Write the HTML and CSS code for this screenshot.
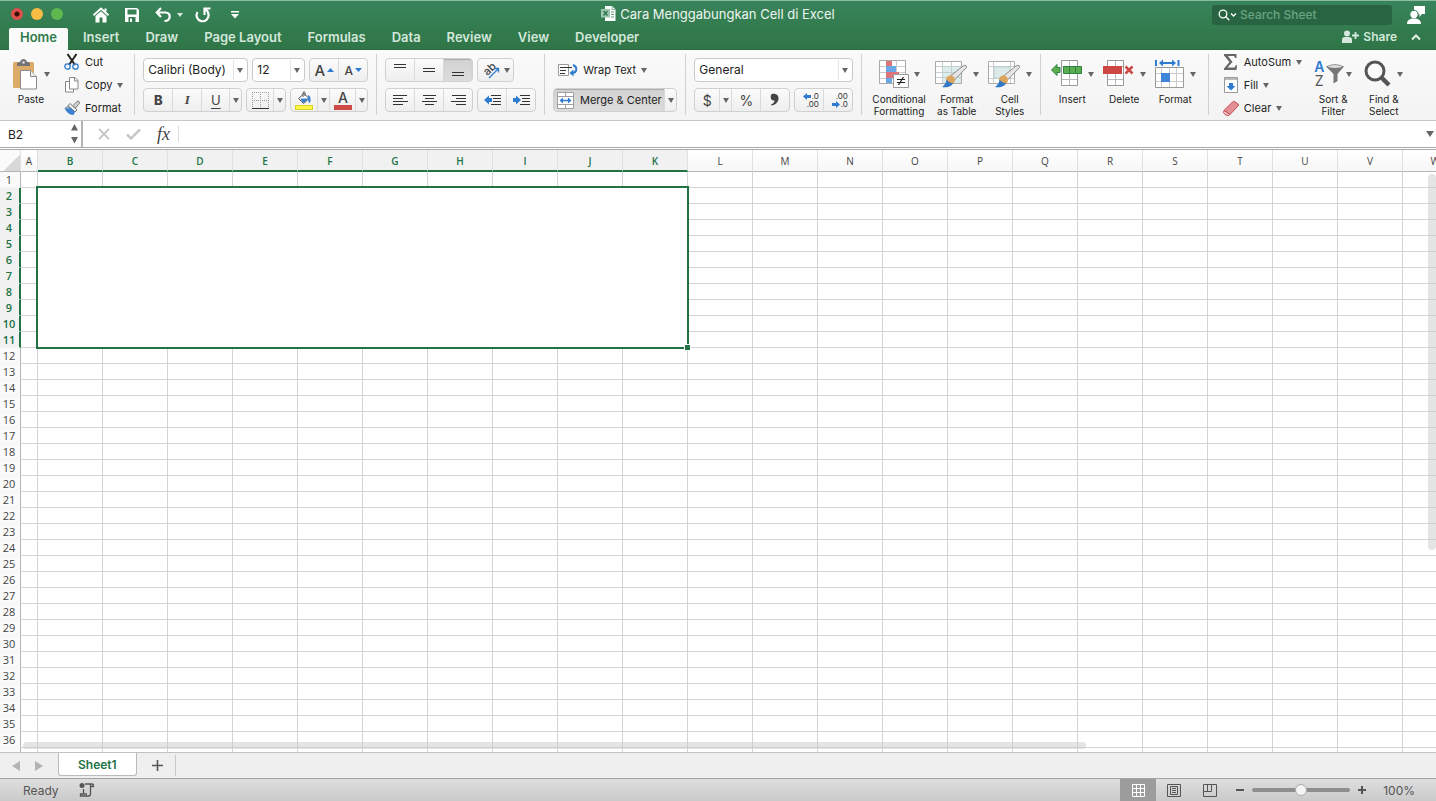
FILE: index.html
```
<!DOCTYPE html>
<html lang="en">
<head>
    <meta charset="UTF-8">
    <meta name="viewport" content="width=device-width, initial-scale=1.0">
    <title>Cara Menggabungkan Cell di Excel</title>
    <link rel="stylesheet" href="styles.css">
</head>
<body>
    <header class="header">
        <div class="titlebar">
            <div class="quick">
                <div class="lights">
                    <button class="light red" aria-label="Close"></button>
                    <button class="light yellow" aria-label="Minimize"></button>
                    <button class="light green" aria-label="Zoom window"></button>
                </div>
                <button class="q-home" aria-label="Home screen">
                    <svg width="18" height="16" viewBox="0 0 18 16"><path d="M1.5 8.2L9 1.6l7.500 6.600M13.500 4.500V1.500" fill="none" stroke="#fff" stroke-width="2"/><path d="M3.500 9L9 4.300 14.500 9v6.500H10.500v-5h-3v5h-4z" fill="#fff"/></svg>
                </button>
                <button class="q-save" aria-label="Save">
                    <svg width="14" height="14" viewBox="0 0 14 14"><path d="M0 0h12l2 2v12H0zM2.500 1.500v5h9v-5zM3.500 9v5h7V9z" fill="#fff" fill-rule="evenodd"/><path d="M5 10.500h2V14H5z" fill="#fff"/></svg>
                </button>
                <button class="q-undo" aria-label="Undo">
                    <svg width="17" height="16" viewBox="0 0 17 16"><path d="M6 1L1.800 5.500 6 10M2 5.500h8.500c6 0 5.500 8.500-1 8.500" fill="none" stroke="#fff" stroke-width="2.200"/></svg>
                    <span class="caret light-caret"></span>
                </button>
                <button class="q-redo" aria-label="Redo">
                    <svg width="16" height="16" viewBox="0 0 16 16"><path d="M2.500 5A6 6 0 1 0 13.500 7.500Q13.500 4.500 10.500 2.500" fill="none" stroke="#fff" stroke-width="2.200"/><path d="M15.500 1.500H9.500V8" fill="none" stroke="#fff" stroke-width="2.200"/></svg>
                </button>
                <button class="q-more" aria-label="Customize toolbar">
                    <svg width="8" height="8" viewBox="0 0 8 8"><path d="M0 0h8v1.500H0zM0 3h8L4 7.500z" fill="#fff"/></svg>
                </button>
            </div>
            <h1 class="doc-title">
                <svg width="15" height="15" viewBox="0 0 15 15"><path d="M4 0h7l3.500 3.500V15H4z" fill="#fff"/><path d="M11 0v3.500h3.500" fill="none" stroke="#86b899"/><path d="M10 6h3M10 8.500h3M10 11h3" stroke="#5a9a74"/><path d="M0 3h9v8.500H0z" fill="#9cc6ad"/><path d="M2.500 5l4 4.500M6.500 5l-4 4.500" stroke="#2c7448" stroke-width="1.300"/></svg>
                Cara Menggabungkan Cell di Excel
            </h1>
            <div class="tools">
                <div class="search">
                    <svg width="19" height="12" viewBox="0 0 19 12"><circle cx="5" cy="5" r="3.800" fill="none" stroke="#fff" stroke-width="1.300"/><path d="M7.800 7.800l3.500 3.500M13 4.500l2.500 2.500L18 4.500" fill="none" stroke="#fff" stroke-width="1.300"/></svg>
                    <input type="text" placeholder="Search Sheet" aria-label="Search Sheet">
                </div>
                <button class="feedback" aria-label="Feedback">
                    <svg width="18" height="18" viewBox="0 0 18 18"><path d="M7 0h11v8h-3l-2.500 3V8H7z" fill="#fff"/><circle cx="7" cy="8.500" r="4.200" fill="#fff" stroke="#327c50"/><path d="M0 18c0-4 3-5.500 7-5.500s7 1.500 7 5.500z" fill="#fff"/></svg>
                </button>
            </div>
        </div>
        <nav class="tabs">
            <a class="tab active" href="#">Home</a>
            <a class="tab" href="#">Insert</a>
            <a class="tab" href="#">Draw</a>
            <a class="tab" href="#">Page Layout</a>
            <a class="tab" href="#">Formulas</a>
            <a class="tab" href="#">Data</a>
            <a class="tab" href="#">Review</a>
            <a class="tab" href="#">View</a>
            <a class="tab" href="#">Developer</a>
            <button class="share">
                <svg width="17" height="13" viewBox="0 0 17 13"><circle cx="5" cy="3.500" r="3" fill="#d6e8dc"/><path d="M0 13V9.500Q0 7 3 7h4q3 0 3 2.500V13z" fill="#d6e8dc"/><path d="M13.500 2v7M10 5.500h7" stroke="#d6e8dc" stroke-width="1.800"/></svg>
                Share
            </button>
            <button class="collapse" aria-label="Collapse ribbon">
                <svg width="10" height="7" viewBox="0 0 10 7"><path d="M1 5.500l4-4 4 4" fill="none" stroke="#e3f0e7" stroke-width="2"/></svg>
            </button>
        </nav>
    </header>

    <section class="ribbon">
        <div class="group clipboard">
            <button class="big paste">
                <span class="art">
                    <svg width="27" height="31" viewBox="0 0 27 31"><rect x="1" y="3" width="21" height="26" rx="1.500" fill="#dcab67"/><path d="M5 7V4.500q0-1.500 2-1.500h1q1-3 3.500-3T15 3h1q2 0 2 1.500V7z" fill="#737373"/><circle cx="11.500" cy="3.500" r="1.300" fill="#ddd"/><path d="M8.500 11.500h10l6 6v12.500h-16z" fill="#fff" stroke="#8b8b8b"/><path d="M18.500 11.500v6h6" fill="#eee" stroke="#8b8b8b"/></svg>
                    <span class="caret"></span>
                </span>
                <span>Paste</span>
            </button>
            <div class="stack">
                <button class="small">
                    <svg width="16" height="16" viewBox="0 0 16 16"><path d="M3.500 0L11 11M12.500 0L5 11" stroke="#222" stroke-width="2"/><circle cx="3.500" cy="12.500" r="2.700" fill="none" stroke="#2f7bd0" stroke-width="1.300"/><circle cx="11.500" cy="12.500" r="2.700" fill="none" stroke="#2f7bd0" stroke-width="1.300"/></svg>
                    Cut
                </button>
                <button class="small">
                    <svg width="16" height="16" viewBox="0 0 16 16"><path d="M1.500 4.500h6l2 2v8.500h-8z" fill="#fff" stroke="#888"/><path d="M5.500.500h5.500l3 3v8.500H5.500z" fill="#fff" stroke="#888"/><path d="M10.500.500v3.500H14" fill="none" stroke="#888"/></svg>
                    Copy <span class="caret"></span>
                </button>
                <button class="small">
                    <svg width="16" height="16" viewBox="0 0 16 16"><path d="M9 5.500L13.500 1q2 0 2 2L11.500 8z" fill="#d5d5d5" stroke="#777"/><path d="M6 3.500l7 6.500-2 2L4 5.500z" fill="#f0f0f0" stroke="#777"/><path d="M4 5.500l7 6.500-1.500 3C5 15 2.500 12 .5 8q2-.5 3.500-2.500z" fill="#3a82d1"/><path d="M4 5.500L6.500 8Q4 9.500.5 8q2-.5 3.500-2.500z" fill="#9aa5b0"/></svg>
                    Format
                </button>
            </div>
        </div>

        <div class="group rows">
            <div class="row">
                <div class="combo family"><select aria-label="Font"><option>Calibri (Body)</option></select></div>
                <div class="combo size"><select aria-label="Font size"><option>12</option></select></div>
                <div class="seg">
                    <button class="grow" aria-label="Increase font size">A<svg width="7" height="10" viewBox="0 0 7 10"><path d="M0 7h7L3.500 3z" fill="#2f7bd0"/></svg></button>
                    <button class="shrink" aria-label="Decrease font size">A<svg width="7" height="10" viewBox="0 0 7 10"><path d="M0 3h7L3.500 7z" fill="#2f7bd0"/></svg></button>
                </div>
            </div>
            <div class="row">
                <div class="seg">
                    <button class="bold">B</button>
                    <button class="italic">I</button>
                    <button class="under">U</button>
                    <button class="drop" aria-label="Underline options"><span class="caret"></span></button>
                </div>
                <div class="seg">
                    <button class="split" aria-label="Borders"><svg width="17" height="17" viewBox="0 0 17 17"><path d="M.5 0v16M8.500 0v16M16.500 0v16M0 .5h17M0 8.500h17" stroke="#999" stroke-dasharray="1 1"/><path d="M0 16.500h17" stroke="#333"/></svg></button>
                    <button class="drop" aria-label="Border options"><span class="caret"></span></button>
                </div>
                <div class="seg">
                    <button class="tint" aria-label="Fill color"><svg width="18" height="19" viewBox="0 0 18 19"><rect x=".5" y="14.500" width="17" height="4" fill="#fbf54a" stroke="#ddd321"/><path d="M3.500 7.500L9 2.500l5 5-5.500 5z" fill="#fff" stroke="#555"/><path d="M8 6V1.500q1-1.500 2 0V5" fill="none" stroke="#555"/><path d="M5 7.500h8.500l-5 4.500zM13 4c3 1 3 5 2 8-2 0-2-4-2-8z" fill="#3a82d1"/></svg></button>
                    <button class="drop" aria-label="Fill color options"><span class="caret"></span></button>
                    <button class="tint font-color" aria-label="Font color">A<svg width="18" height="5" viewBox="0 0 18 5"><rect width="18" height="5" fill="#d04a45"/></svg></button>
                    <button class="drop" aria-label="Font color options"><span class="caret"></span></button>
                </div>
            </div>
        </div>

        <div class="group rows">
            <div class="row">
                <div class="seg">
                    <button aria-label="Top align"><svg width="14" height="14" viewBox="0 0 14 14"><path d="M1 1.500h12M1 4.500h12" stroke="#333"/></svg></button>
                    <button aria-label="Middle align"><svg width="14" height="14" viewBox="0 0 14 14"><path d="M1 5.500h12M1 8.500h12" stroke="#333"/></svg></button>
                    <button class="pressed" aria-label="Bottom align"><svg width="14" height="14" viewBox="0 0 14 14"><path d="M1 9.500h12M1 12.500h12" stroke="#333"/></svg></button>
                </div>
                <div class="seg">
                    <button class="orient" aria-label="Orientation">
                        <svg width="18" height="18" viewBox="0 0 18 18"><text class="glyph" x="1" y="12" font-size="11" transform="rotate(-45 7 8)">ab</text><path d="M7 17l9-9M12.500 7.500h4v4" fill="none" stroke="#2f7bd0" stroke-width="1.300"/></svg>
                        <span class="caret"></span>
                    </button>
                </div>
            </div>
            <div class="row">
                <div class="seg">
                    <button aria-label="Align left"><svg width="15" height="12" viewBox="0 0 15 12"><path d="M0 1.500h14M0 4.500h10M0 7.500h15M0 10.500h10" stroke="#333"/></svg></button>
                    <button aria-label="Center"><svg width="15" height="12" viewBox="0 0 15 12"><path d="M1 1.500h13M3 4.500h9M0 7.500h15M3 10.500h9" stroke="#333"/></svg></button>
                    <button aria-label="Align right"><svg width="15" height="12" viewBox="0 0 15 12"><path d="M1 1.500h14M5 4.500h10M0 7.500h15M5 10.500h10" stroke="#333"/></svg></button>
                </div>
                <div class="seg">
                    <button aria-label="Decrease indent"><svg width="17" height="12" viewBox="0 0 17 12"><path d="M7 1.500h10M9 4.500h8M9 7.500h8M7 10.500h10" stroke="#333"/><path d="M0 6L5 1.500V4h3v4H5v2.500z" fill="#2f7bd0"/></svg></button>
                    <button aria-label="Increase indent"><svg width="17" height="12" viewBox="0 0 17 12"><path d="M7 1.500h10M9 4.500h8M9 7.500h8M7 10.500h10" stroke="#333"/><path d="M8 6L3 1.500V4H0v4h3v2.500z" fill="#2f7bd0"/></svg></button>
                </div>
            </div>
        </div>

        <div class="group rows">
            <div class="row">
                <button class="wrap">
                    <svg width="20" height="14" viewBox="0 0 20 14"><path d="M.5 1.500h10v11H.5z" fill="#fff" stroke="#999"/><path d="M2 4.500h12M2 7.500h6M2 10.500h5" stroke="#333"/><path d="M15 2c5 2 4 8-1 8" fill="none" stroke="#2f7bd0" stroke-width="2"/><path d="M11.500 10l4-3.500v7z" fill="#2f7bd0"/></svg>
                    Wrap Text <span class="caret"></span>
                </button>
            </div>
            <div class="row">
                <div class="seg">
                    <button class="merge pressed">
                        <svg width="17" height="17" viewBox="0 0 17 17"><path d="M.5.5h16v16H.5z" fill="#fff" stroke="#a0a0a0"/><path d="M.5 4.500h16M.5 12.500h16M8.500.5v4M8.500 12.500v4" fill="none" stroke="#a0a0a0"/><path d="M4 8.500h9" stroke="#2f7bd0" stroke-width="1.500"/><path d="M2.500 8.500L6 5.500v6zM14.500 8.500L11 5.500v6z" fill="#2f7bd0"/></svg>
                        Merge &amp; Center
                    </button>
                    <button class="drop" aria-label="Merge options"><span class="caret"></span></button>
                </div>
            </div>
        </div>

        <div class="group rows">
            <div class="row">
                <div class="combo format"><select aria-label="Number format"><option>General</option></select></div>
            </div>
            <div class="row">
                <div class="seg">
                    <button class="sign money">$</button>
                    <button class="drop" aria-label="Currency options"><span class="caret"></span></button>
                    <button class="sign">%</button>
                    <button aria-label="Comma style"><svg width="8" height="12" viewBox="0 0 8 12"><path d="M1 0c4-1 7 1.500 6.500 5S4 11 .5 11.500L0 10.500c2.500-1 3.500-2.500 3.500-4C-1 7-1 1 1 0z" fill="#444"/></svg></button>
                </div>
                <div class="seg">
                    <button class="decimal" aria-label="Increase decimal">
                        <span class="digits"><svg width="8" height="7" viewBox="0 0 8 7"><path d="M0 3.500L4 0v2h4v3H4v2z" fill="#2f7bd0"/></svg>.0</span>
                        <span class="digits">.00</span>
                    </button>
                    <button class="decimal" aria-label="Decrease decimal">
                        <span class="digits">.00</span>
                        <span class="digits"><svg width="8" height="7" viewBox="0 0 8 7"><path d="M8 3.500L4 0v2H0v3h4v2z" fill="#2f7bd0"/></svg>.0</span>
                    </button>
                </div>
            </div>
        </div>

        <div class="group styles">
            <button class="big">
                <span class="art">
                    <svg width="30" height="28" viewBox="0 0 30 28"><path d="M.5.500h26v23H.5z" fill="#fff" stroke="#aaa"/><path d="M7.500 1v22M17.500 1v22M1 6.500h25M1 12.500h25M1 18.500h25" stroke="#ccc"/><path d="M7 1h6v6H7zM7 12h13v6H7z" fill="#dc7479"/><path d="M7 6h10v6H7zM7 18h6v5H7z" fill="#6ba7e5"/><path d="M14.500 14.500h15v13h-15z" fill="#fff" stroke="#999"/><path d="M18 19.500h8M18 22.500h8M24.500 17l-5 8" stroke="#222" stroke-width="1.200"/></svg>
                    <span class="caret"></span>
                </span>
                <span>Conditional<br>Formatting</span>
            </button>
            <button class="big">
                <span class="art">
                    <svg width="33" height="28" viewBox="0 0 33 28"><path d="M.5 1.500h26v22H.5z" fill="#fff" stroke="#aaa"/><path d="M8 7h18v16H8z" fill="#dcecec"/><path d="M7.500 2v21M16.500 2v21M1 6.500h25M1 12.500h25M1 17.500h25" stroke="#c4cfcf"/><path d="M31.500 7.500L19.500 20l-4-4L28 6q4-2 3.500 1.500z" fill="#e5e5e5" stroke="#8b8b8b"/><circle cx="15.500" cy="20" r="4.500" fill="#dda55c"/><path d="M11.500 19.500c0 3-2 5.500-4.500 7.500 6 1 10-1 11-4q-4 0-6.500-3.500z" fill="#3279c8"/></svg>
                    <span class="caret"></span>
                </span>
                <span>Format<br>as Table</span>
            </button>
            <button class="big">
                <span class="art">
                    <svg width="33" height="28" viewBox="0 0 33 28"><path d="M.5 1.500h26v22H.5z" fill="#fff" stroke="#aaa"/><path d="M5.500 2v21M22.500 2v21M1 6.500h25M1 18.500h25" stroke="#ccc"/><path d="M6 7h16v11H6z" fill="#dcebe9" stroke="#b7d3cf"/><path d="M31.500 7.500L19.500 20l-4-4L28 6q4-2 3.500 1.500z" fill="#e5e5e5" stroke="#8b8b8b"/><circle cx="15.500" cy="20" r="4.500" fill="#dda55c"/><path d="M11.500 19.500c0 3-2 5.500-4.500 7.500 6 1 10-1 11-4q-4 0-6.500-3.500z" fill="#3279c8"/></svg>
                    <span class="caret"></span>
                </span>
                <span>Cell<br>Styles</span>
            </button>
        </div>

        <div class="group cells">
            <button class="big">
                <span class="art">
                    <svg width="32" height="28" viewBox="0 0 32 28"><path d="M10.500.500h16v25h-16z" fill="#fff" stroke="#999"/><path d="M18.500 1v24M11 6.500h15M11 19.500h15" stroke="#bbb"/><path d="M12.500 6.500h18v7h-18zM.5 10L6 4.500v3h3v5H6v3z" fill="#5aae50" stroke="#2e8140"/><path d="M18.500 7v6M24.500 7v6" stroke="#2e8140"/></svg>
                    <span class="caret"></span>
                </span>
                <span>Insert</span>
            </button>
            <button class="big">
                <span class="art">
                    <svg width="32" height="28" viewBox="0 0 32 28"><path d="M4.500.500h16v25h-16z" fill="#fff" stroke="#999"/><path d="M12.500 1v24M5 6.500h15M5 19.500h15" stroke="#bbb"/><path d="M0 6h19v8H0z" fill="#cf4744"/><path d="M22.500 6.500l7 7M29.500 6.500l-7 7" stroke="#cf4744" stroke-width="2.500"/></svg>
                    <span class="caret"></span>
                </span>
                <span>Delete</span>
            </button>
            <button class="big">
                <span class="art">
                    <svg width="30" height="28" viewBox="0 0 30 28"><path d="M.5 7.500h28v20H.5z" fill="#fff" stroke="#999"/><path d="M6.500 8v19M14.500 8v19M21.500 8v19M1 13.500h27M1 21.500h27" stroke="#ccc"/><path d="M6 13h9v9H6z" fill="#3f86d8"/><path d="M1 0v6M23.500 0v6M7 3h11" stroke="#2f7bd0" stroke-width="2"/><path d="M4 3l4-3.500v7zM21 3l-4-3.500v7z" fill="#2f7bd0"/></svg>
                    <span class="caret"></span>
                </span>
                <span>Format</span>
            </button>
        </div>

        <div class="group editing">
            <div class="stack">
                <button class="small">
                    <svg width="16" height="16" viewBox="0 0 16 16"><path d="M1 0h12.500v4h-1.300L11 2H5l4.500 6L4.500 13.500h7l1.500-2.500h1l-.5 5H1v-1.500L6.500 8 1 1.500z" fill="#666"/></svg>
                    AutoSum <span class="caret"></span>
                </button>
                <button class="small">
                    <svg width="16" height="16" viewBox="0 0 16 16"><path d="M1.500.500h13v15h-13z" fill="#fff" stroke="#999"/><path d="M2 1h12v2H2z" fill="#bbb"/><path d="M6 6h4v3h2.500L8 13.500 3.500 9H6z" fill="#2f7bd0"/></svg>
                    Fill <span class="caret"></span>
                </button>
                <button class="small">
                    <svg width="16" height="16" viewBox="0 0 16 16"><path d="M1 10.500L9.500 2q1-1 2-.5L15 4q1 1 0 2L7 14.500z" fill="#e38f96" stroke="#c7484c"/><path d="M1 10.500l6 4-1.500 1q-4 0-5-3z" fill="#f4c8ca" stroke="#c7484c"/></svg>
                    Clear <span class="caret"></span>
                </button>
            </div>
            <button class="big">
                <span class="art sort-art">
                    <span class="az"><b>A</b><span>Z</span></span>
                    <svg width="18" height="20" viewBox="0 0 18 20"><path d="M0 2.500q9-4.500 18 0L11.500 10v7l-4 2.500V10z" fill="#777"/><ellipse cx="9" cy="2.500" rx="7" ry="1.500" fill="#ddd"/></svg>
                    <span class="caret"></span>
                </span>
                <span>Sort &amp;<br>Filter</span>
            </button>
            <button class="big">
                <span class="art">
                    <svg width="28" height="28" viewBox="0 0 28 28"><circle cx="11" cy="11" r="9" fill="#fafafa" stroke="#555" stroke-width="3"/><path d="M17.500 17.500l7.500 7.500" stroke="#555" stroke-width="4.500"/></svg>
                    <span class="caret"></span>
                </span>
                <span>Find &amp;<br>Select</span>
            </button>
        </div>
    </section>

    <section class="formula-bar">
        <div class="namebox">
            <input type="text" value="B2" aria-label="Name box">
            <svg width="8" height="20" viewBox="0 0 8 20"><path d="M0 6.500h7L3.500 0zM0 13h7l-3.500 6.500z" fill="#666"/></svg>
        </div>
        <button aria-label="Cancel"><svg width="12" height="12" viewBox="0 0 12 12"><path d="M1 1l10 10M11 1L1 11" stroke="#c8c8c8" stroke-width="2"/></svg></button>
        <button aria-label="Enter"><svg width="15" height="12" viewBox="0 0 15 12"><path d="M1 6.500L5 10.500 14 1.500" fill="none" stroke="#c8c8c8" stroke-width="2.500"/></svg></button>
        <button class="fx" aria-label="Insert function">fx</button>
        <input class="formula" type="text" aria-label="Formula">
        <button class="expand" aria-label="Expand formula bar"><span class="caret big-caret"></span></button>
    </section>

    <main class="sheet">
        <table class="grid" id="grid"></table>
        <div class="vscroll"></div>
        <div class="hscroll"></div>
    </main>

    <div class="sheet-tabs">
        <button aria-label="Previous sheet"><svg width="8" height="10" viewBox="0 0 8 10"><path d="M8 0v10L0 5z" fill="#b3b3b3"/></svg></button>
        <button aria-label="Next sheet"><svg width="8" height="10" viewBox="0 0 8 10"><path d="M0 0v10l8-5z" fill="#b3b3b3"/></svg></button>
        <a class="sheet-tab" href="#">Sheet1</a>
        <button class="add" aria-label="Add sheet"><svg width="11" height="11" viewBox="0 0 11 11"><path d="M5.500 0v11M0 5.500h11" stroke="#555" stroke-width="1.600"/></svg></button>
    </div>

    <footer class="status">
        <span class="ready">Ready</span>
        <button class="macro" aria-label="Record macro"><svg width="15" height="14" viewBox="0 0 15 14"><circle cx="3" cy="2.500" r="2.500" fill="#555"/><path d="M6 1h7q1.500 0 1.500 2.500H12M11.500 1.500V11q0 2-2 2H1.500v-2H8M4.500 6v5" fill="none" stroke="#555" stroke-width="1.300"/></svg></button>
        <div class="views">
            <button class="view on" aria-label="Normal view"><svg width="13" height="13" viewBox="0 0 13 13"><path d="M.5.500h12v12H.5zM4.500 0v13M8.500 0v13M0 4.500h13M0 8.500h13" fill="none" stroke="#fff"/></svg></button>
            <button class="view" aria-label="Page layout view"><svg width="14" height="13" viewBox="0 0 14 13"><path d="M.5.500h13v12H.5zM3.500 2.500h7v8h-7zM5 4.500h4M5 6.500h4M5 8.500h4" fill="none" stroke="#555"/></svg></button>
            <button class="view" aria-label="Page break view"><svg width="14" height="13" viewBox="0 0 14 13"><path d="M.5.500h13v12H.5zM.5 7.500h8V.5M4.500 .5v7" fill="none" stroke="#555"/></svg></button>
        </div>
        <button class="zoom-btn" aria-label="Zoom out"><svg width="8" height="8" viewBox="0 0 8 8"><path d="M0 4h8" stroke="#555" stroke-width="2"/></svg></button>
        <input class="zoom" type="range" min="0" max="100" value="50" aria-label="Zoom">
        <button class="zoom-btn" aria-label="Zoom in"><svg width="8" height="8" viewBox="0 0 8 8"><path d="M0 4h8M4 0v8" stroke="#555" stroke-width="2"/></svg></button>
        <span class="percent">100%</span>
    </footer>

    <script src="script.js"></script>
</body>
</html>
```
FILE: styles.css
```
* {
    box-sizing: border-box;
}

body {
    margin: 0;
    height: 100vh;
    display: flex;
    flex-direction: column;
    overflow: hidden;
    font-family: Inter, "Liberation Sans", sans-serif;
    font-size: 11px;
    color: #222;
    background: #fff;
}

button, input, select {
    font: inherit;
    color: inherit;
    border: 0;
    padding: 0;
    background: none;
}

svg {
    display: block;
    flex: none;
    overflow: visible;
}

a {
    text-decoration: none;
}

.caret {
    flex: none;
    border: 3px solid transparent;
    border-top: 5px solid #666;
    border-bottom: 0;
}

/* green header */
.header {
    background: linear-gradient(#38845a, #2f7547);
    border-top: 1px solid #8dbb9f;
    border-bottom: 1px solid #296a40;
}

.titlebar {
    height: 27px;
    display: grid;
    grid-template-columns: 1fr auto 1fr;
    align-items: center;
}

.quick, .lights, .tools, .doc-title, .search {
    display: flex;
    align-items: center;
}

.lights {
    gap: 8px;
    padding: 0 29px 2px 11px;
}

.light {
    width: 12px;
    height: 12px;
    border-radius: 50%;
}

.red {
    background: radial-gradient(circle, #3b0d0b 2px, #dc4f4b 3px);
}

.yellow {
    background: #f7bd45;
}

.green {
    background: #5fb84e;
}

.q-save {
    margin-left: 15px;
}

.q-undo {
    display: flex;
    align-items: center;
    gap: 5px;
    margin-left: 16px;
}

.q-redo {
    margin-left: 12px;
}

.q-more {
    margin-left: 20px;
}

.light-caret {
    border-top-color: #d6e8dc;
    border-top-width: 4px;
}

.doc-title {
    margin: 0;
    padding-bottom: 2px;
    gap: 4px;
    font-size: 13px;
    font-weight: 400;
    color: #edf5ef;
}

.tools {
    justify-content: flex-end;
    gap: 15px;
    padding-right: 11px;
}

.search {
    width: 180px;
    height: 20px;
    padding-left: 6px;
    gap: 3px;
    border-radius: 3px;
    background: #286442;
}

.search input {
    width: 120px;
    font-size: 12px;
    font-weight: 500;
    outline: none;
}

.search input::placeholder {
    color: #69a481;
    opacity: 1;
}

.tabs {
    height: 21px;
    display: flex;
    gap: 4px;
    padding-left: 9px;
    padding-right: 15px;
}

.tab {
    padding: 0 11px;
    line-height: 19px;
    font-size: 13px;
    font-weight: 600;
    color: #d3e7da;
}

.tab.active {
    height: 22px;
    color: #2f7b4d;
    background: #fafafa;
    border-radius: 2px 2px 0 0;
}

.share {
    display: flex;
    align-items: center;
    gap: 4px;
    height: 16px;
    margin-left: auto;
    font-size: 12px;
    font-weight: 600;
    color: #d3e7da;
}

.collapse {
    height: 18px;
    margin-left: 10px;
}

/* ribbon */
.ribbon {
    display: flex;
    padding: 4px 0 5px;
    background: linear-gradient(#fafafa, #f3f3f3);
    border-bottom: 1px solid #c6c6c6;
}

.group {
    display: flex;
    height: 61px;
    padding: 0 8px;
    border-right: 1px solid #d0d0d0;
}

.group:last-child {
    border-right: 0;
}

.rows {
    flex-direction: column;
    gap: 6px;
    padding-top: 4px;
}

.row {
    display: flex;
    gap: 4px;
    height: 24px;
}

.clipboard {
    gap: 14px;
    padding: 0 11px 0 12px;
}

.styles {
    gap: 9px;
    padding-left: 10px;
}

.cells {
    gap: 9px;
    padding: 0 12px 0 10px;
}

.editing {
    gap: 12px;
    padding-left: 14px;
}

.big {
    display: flex;
    flex-direction: column;
    align-items: center;
    padding-top: 6px;
    font-size: 10px;
    line-height: 12px;
    white-space: nowrap;
}

.art {
    display: flex;
    align-items: center;
    gap: 5px;
    height: 28px;
    margin-bottom: 5px;
}

.stack {
    display: flex;
    flex-direction: column;
    gap: 7px;
}

.small {
    display: flex;
    align-items: center;
    gap: 5px;
    height: 16px;
    font-size: 11px;
    white-space: nowrap;
}

.seg {
    display: flex;
    border: 1px solid #d0d0d0;
    border-radius: 4px;
    background: linear-gradient(#fbfbfb, #eeeeee);
    overflow: hidden;
}

.seg button {
    display: flex;
    align-items: center;
    justify-content: center;
    width: 29px;
}

.seg > :first-child {
    width: 28px;
}

.seg button + button {
    border-left: 1px solid #dadada;
}

.seg .drop {
    width: 12px;
}

.seg .tint {
    width: 26px;
}

.seg .split {
    width: 26px;
}

.seg .under {
    width: 28px;
}

.seg .money {
    width: 24px;
}

.seg .pressed {
    background: linear-gradient(#d2d2d2, #dcdcdc);
    box-shadow: inset 0 1px 1px #aaa;
}

.seg .orient {
    width: 35px;
    gap: 4px;
}

.seg .merge {
    width: 110px;
    gap: 6px;
    white-space: nowrap;
}

.grow, .shrink {
    gap: 2px;
    font-weight: 500;
    color: #444;
}

.grow {
    font-size: 15px;
}

.shrink {
    font-size: 12px;
}

.seg .font-color {
    flex-direction: column;
    font-size: 14px;
    line-height: 14px;
    font-weight: 500;
    color: #444;
}

.bold, .italic, .under {
    font-size: 13px;
    color: #444;
}

.bold {
    font-weight: 800;
}

.italic {
    font-family: "Liberation Serif", serif;
    font-style: italic;
    font-weight: 700;
}

.under {
    text-decoration: underline;
    text-underline-offset: 3px;
}

.sign {
    font-size: 14px;
    color: #444;
}

.glyph {
    fill: #444;
    font-weight: 500;
}

.seg .decimal {
    flex-direction: column;
    align-items: center;
}

.digits {
    display: flex;
    align-items: center;
    justify-content: flex-end;
    gap: 1px;
    width: 19px;
    font-size: 8px;
    line-height: 8px;
    color: #333;
}

.sort-art {
    gap: 2px;
}

.az {
    display: flex;
    flex-direction: column;
    font-size: 14px;
    line-height: 14px;
    color: #555;
}

.az b {
    font-weight: 600;
    color: #2f7bd0;
}

.combo {
    position: relative;
    height: 24px;
    border: 1px solid #cacaca;
    border-radius: 4px;
    background: #fff;
}

.combo select {
    appearance: none;
    width: 100%;
    height: 20px;
    padding-left: 4px;
    font-size: 12px;
}

/* arrow of the drop-down */
.combo::after {
    content: "";
    position: absolute;
    right: 4px;
    top: 9px;
    border: 3px solid transparent;
    border-top: 5px solid #666;
    border-bottom: 0;
    pointer-events: none;
}

.combo::before {
    content: "";
    position: absolute;
    right: 13px;
    top: 1px;
    bottom: 1px;
    border-left: 1px solid #e4e4e4;
}

.family {
    width: 105px;
}

.size {
    width: 53px;
}

.format {
    width: 159px;
}

.wrap {
    display: flex;
    align-items: center;
    gap: 5px;
    padding-left: 5px;
}

/* formula bar */
.formula-bar {
    display: flex;
    align-items: center;
    height: 29px;
    border-bottom: 3px double #a9a9a9;
}

.namebox {
    display: flex;
    align-items: center;
    width: 83px;
    height: 26px;
    margin-right: 15px;
    padding: 0 2px 0 8px;
    border-right: 2px solid #b5b5b5;
}

.namebox input {
    flex: 1;
    min-width: 0;
    font-size: 12px;
}

.formula-bar button {
    margin-right: 16px;
}

.formula-bar .fx {
    margin-right: 8px;
    font-family: "Liberation Serif", serif;
    font-size: 18px;
    font-style: italic;
    color: #444;
}

.formula {
    flex: 1;
    height: 16px;
    border-left: 1px solid #dcdcdc;
}

.formula-bar .expand {
    margin-right: 2px;
}

.big-caret {
    display: block;
    border-width: 6px 4px 0;
}

/* worksheet */
.sheet {
    position: relative;
    flex: 1;
    min-height: 0;
    overflow: hidden;
}

.grid {
    table-layout: fixed;
    width: 0;
    border-spacing: 0;
    font-family: "Open Sans", "Noto Sans", sans-serif;
    font-size: 11px;
    color: #444;
}

.grid th, .grid td {
    height: 16px;
    padding: 0;
    line-height: 15px;
    font-weight: 400;
    border-right: 1px solid #d4d4d4;
    border-bottom: 1px solid #d4d4d4;
}

.grid thead th {
    height: 22px;
    padding-top: 2px;
    font-size: 10px;
    border-bottom-color: #b5b5b5;
    border-right-color: #e0e0e0;
    background: linear-gradient(#fff, #f7f7f7);
}

.grid tbody th {
    border-right-color: #b5b5b5;
    border-bottom-color: #f4f4f4;
    background: #fafafa;
    padding-right: 2px;
}

.grid thead .picked, .grid tbody .picked {
    color: #217346;
    font-weight: 600;
    background: #f1f1f1;
}

.grid thead .picked {
    border-bottom: 2px solid #217346;
}

.grid tbody .picked {
    padding-right: 1px;
    border-right: 2px solid #217346;
}

.grid .corner {
    background: linear-gradient(135deg, #fafafa 60%, #d8d8d8 60%);
}

.col-head {
    width: 21px;
}

.col-a {
    width: 17px;
}

.col {
    width: 65px;
}

.merged {
    position: relative;
}

.selection {
    position: absolute;
    inset: -2px;
    border: 2px solid #217346;
}

.handle {
    position: absolute;
    right: -4px;
    bottom: -4px;
    width: 7px;
    height: 7px;
    border: 1px solid #fff;
    background: #217346;
}

.vscroll, .hscroll {
    position: absolute;
    border-radius: 4px;
    background: rgba(200, 204, 202, 0.5);
}

.vscroll {
    top: 24px;
    right: 0;
    width: 8px;
    height: 62.5%;
}

.hscroll {
    left: 23px;
    bottom: 3px;
    width: 74%;
    height: 7px;
}

/* sheet tabs */
.sheet-tabs {
    display: flex;
    align-items: center;
    gap: 15px;
    height: 26px;
    padding-left: 12px;
    border-top: 1px solid #c2c2c2;
    background: #efefef;
}

.sheet-tab {
    align-self: flex-start;
    height: 23px;
    padding: 0 19px;
    line-height: 23px;
    font-size: 12px;
    font-weight: 600;
    color: #217346;
    background: #fff;
    border: 1px solid #bbb;
    border-top: 0;
    border-radius: 0 0 3px 3px;
}

.add {
    height: 21px;
    padding-right: 12px;
    border-right: 1px solid #c8c8c8;
}

/* status bar */
.status {
    display: flex;
    align-items: center;
    height: 23px;
    padding-left: 23px;
    padding-right: 21px;
    border-top: 1px solid #a4a4a4;
    background: linear-gradient(#dedede, #cacaca);
    font-size: 12px;
    color: #555;
}

.macro {
    margin-left: 20px;
}

.views {
    display: flex;
    align-self: stretch;
    margin-left: auto;
    margin-right: 8px;
}

.view {
    display: flex;
    align-items: center;
    justify-content: center;
    width: 36px;
}

.view.on {
    background: #9c9c9c;
}

.zoom {
    appearance: none;
    width: 98px;
    height: 4px;
    margin: 0 8px;
    border-radius: 2px;
    background: #8f8f8f;
}

.zoom::-webkit-slider-thumb {
    appearance: none;
    width: 12px;
    height: 12px;
    border: 1px solid #aaa;
    border-radius: 50%;
    background: #f5f5f5;
}

.percent {
    margin-left: 17px;
}
```
FILE: script.js
```
const grid = document.querySelector('#grid');
const letters = 'ABCDEFGHIJKLMNOPQRSTUVW'.split('');
const rowCount = 36;

// selected range B2:K11, merged into one cell
const first = { col: 1, row: 2 };
const last = { col: 10, row: 11 };

let html = '<colgroup><col class="col-head"><col class="col-a">';
html += '<col class="col">'.repeat(letters.length - 1) + '</colgroup>';

html += '<thead><tr><th class="corner"></th>';
letters.forEach((letter, i) => {
    const picked = i >= first.col && i <= last.col;
    html += `<th scope="col" class="${picked ? 'picked' : ''}">${letter}</th>`;
});
html += '</tr></thead><tbody>';

for (let row = 1; row <= rowCount; row++) {
    const pickedRow = row >= first.row && row <= last.row;
    html += `<tr><th scope="row" class="${pickedRow ? 'picked' : ''}">${row}</th>`;
    for (let col = 0; col < letters.length; col++) {
        const inside = pickedRow && col >= first.col && col <= last.col;
        if (!inside) {
            html += '<td></td>';
        } else if (row === first.row && col === first.col) {
            html += '<td class="merged" colspan="10" rowspan="10"><div class="selection"></div><div class="handle"></div></td>';
        }
    }
    html += '</tr>';
}

// empty row that runs under the sheet tabs
html += '<tr><th></th>' + '<td></td>'.repeat(letters.length) + '</tr>';

grid.innerHTML = html + '</tbody>';
```
